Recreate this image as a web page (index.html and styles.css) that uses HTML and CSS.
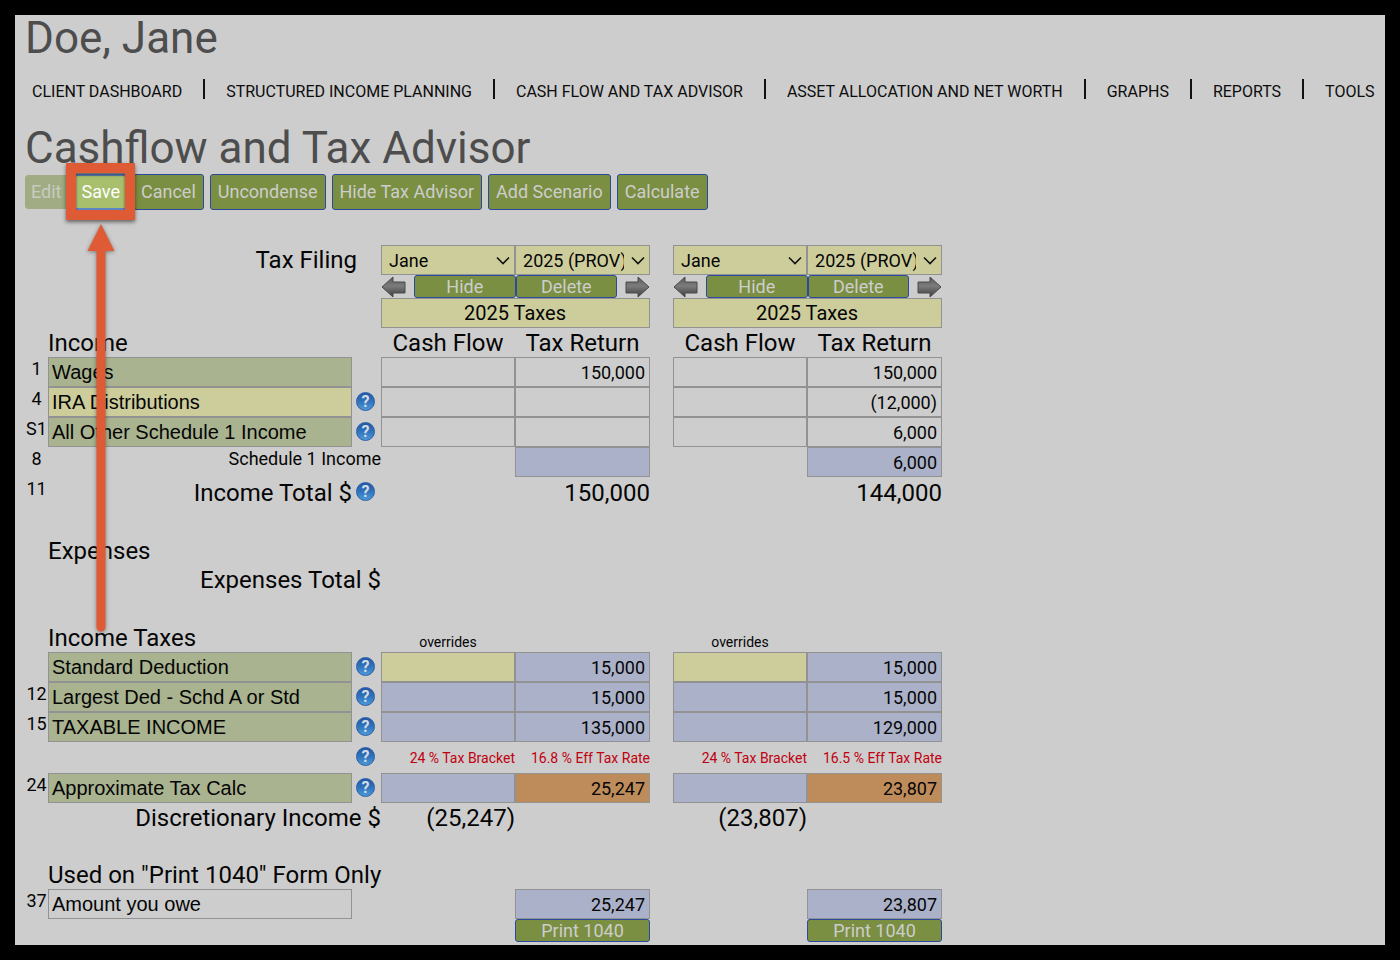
FILE: index.html
```html
<!DOCTYPE html>
<html lang="en">
<head>
<meta charset="utf-8">
<title>Cashflow and Tax Advisor</title>
<link rel="stylesheet" href="styles.css">
</head>
<body>
<svg class="defs" width="0" height="0" aria-hidden="true">
  <defs>
    <linearGradient id="steel" x1="0" y1="0" x2="0" y2="1">
      <stop offset="0" stop-color="#5a5a5a"/>
      <stop offset="0.45" stop-color="#7c7c7c"/>
      <stop offset="1" stop-color="#3c3c3c"/>
    </linearGradient>
    <symbol id="arrow-left" viewBox="0 0 25 22">
      <path d="M1 11 12 1V6H24V17H12V21Z" fill="url(#steel)" stroke="#4a4a4a" stroke-linejoin="round"/>
    </symbol>
    <symbol id="arrow-right" viewBox="0 0 25 22">
      <path d="M24 11 13 1V6H1V17H13V21Z" fill="url(#steel)" stroke="#4a4a4a" stroke-linejoin="round"/>
    </symbol>
    <symbol id="chevron" viewBox="0 0 14 9">
      <path d="M1 1.500 7 7.500 13 1.500" fill="none" stroke="#111" stroke-width="1.600"/>
    </symbol>
  </defs>
</svg>
<main class="page">
  <h1 class="title">Doe, Jane</h1>
  <nav class="menu">
    <a href="#">CLIENT DASHBOARD</a>
    <a href="#">STRUCTURED INCOME PLANNING</a>
    <a href="#">CASH FLOW AND TAX ADVISOR</a>
    <a href="#">ASSET ALLOCATION AND NET WORTH</a>
    <a href="#">GRAPHS</a>
    <a href="#">REPORTS</a>
    <a href="#">TOOLS</a>
  </nav>
  <h2 class="title">Cashflow and Tax Advisor</h2>
  <div class="toolbar">
    <button class="btn" disabled>Edit</button>
    <div class="callout">
      <button class="btn btn-save">Save</button>
      <svg class="pointer" width="28" height="408" viewBox="0 0 28 408" aria-hidden="true">
        <path d="M14 0 27.500 27H18.500V403a4.500 4.500 0 0 1-9 0V27H0.500Z" fill="#de5b35"/>
      </svg>
    </div>
    <button class="btn">Cancel</button>
    <button class="btn">Uncondense</button>
    <button class="btn">Hide Tax Advisor</button>
    <button class="btn">Add Scenario</button>
    <button class="btn">Calculate</button>
  </div>

  <table class="sheet">
    <colgroup>
      <col class="c-line"><col class="c-name"><col class="c-help">
      <col class="c-cash"><col class="c-tax"><col class="c-gap"><col class="c-cash"><col class="c-tax">
    </colgroup>
    <tbody>
      <tr class="row">
        <td></td><th class="big right filing" colspan="2">Tax Filing</th>
        <td><div class="pick"><select aria-label="Filer, scenario 1"><option>Jane</option></select><svg><use href="#chevron"/></svg></div></td>
        <td><div class="pick"><select aria-label="Tax year, scenario 1"><option>2025 (PROV)</option></select><svg><use href="#chevron"/></svg></div></td>
        <td></td>
        <td><div class="pick"><select aria-label="Filer, scenario 2"><option>Jane</option></select><svg><use href="#chevron"/></svg></div></td>
        <td><div class="pick"><select aria-label="Tax year, scenario 2"><option>2025 (PROV)</option></select><svg><use href="#chevron"/></svg></div></td>
      </tr>
      <tr class="slim">
        <td colspan="3"></td>
        <td colspan="2"><div class="moves">
          <button class="move" aria-label="Move left"><svg><use href="#arrow-left"/></svg></button>
          <button class="btn btn-slim">Hide</button><button class="btn btn-slim">Delete</button>
          <button class="move" aria-label="Move right"><svg><use href="#arrow-right"/></svg></button>
        </div></td>
        <td></td>
        <td colspan="2"><div class="moves">
          <button class="move" aria-label="Move left"><svg><use href="#arrow-left"/></svg></button>
          <button class="btn btn-slim">Hide</button><button class="btn btn-slim">Delete</button>
          <button class="move" aria-label="Move right"><svg><use href="#arrow-right"/></svg></button>
        </div></td>
      </tr>
      <tr class="row">
        <td colspan="3"></td>
        <td colspan="2"><input class="field yellow name" aria-label="Name, scenario 1" value="2025 Taxes"></td>
        <td></td>
        <td colspan="2"><input class="field yellow name" aria-label="Name, scenario 2" value="2025 Taxes"></td>
      </tr>
      <tr class="head">
        <td></td><th class="big" colspan="2">Income</th>
        <th class="big center">Cash Flow</th><th class="big center">Tax Return</th><td></td>
        <th class="big center">Cash Flow</th><th class="big center">Tax Return</th>
      </tr>
      <tr class="row">
        <td class="line">1</td><th><div class="label green">Wages</div></th><td></td>
        <td><input class="field" aria-label="Wages cash flow 1"></td><td><input class="field" aria-label="Wages tax return 1" value="150,000"></td><td></td>
        <td><input class="field" aria-label="Wages cash flow 2"></td><td><input class="field" aria-label="Wages tax return 2" value="150,000"></td>
      </tr>
      <tr class="row">
        <td class="line">4</td><th><div class="label yellow">IRA Distributions</div></th><td><button class="help">?</button></td>
        <td><input class="field" aria-label="IRA cash flow 1"></td><td><input class="field" aria-label="IRA tax return 1"></td><td></td>
        <td><input class="field" aria-label="IRA cash flow 2"></td><td><input class="field" aria-label="IRA tax return 2" value="(12,000)"></td>
      </tr>
      <tr class="row">
        <td class="line">S1</td><th><div class="label green">All Other Schedule 1 Income</div></th><td><button class="help">?</button></td>
        <td><input class="field" aria-label="Other income cash flow 1"></td><td><input class="field" aria-label="Other income tax return 1"></td><td></td>
        <td><input class="field" aria-label="Other income cash flow 2"></td><td><input class="field" aria-label="Other income tax return 2" value="6,000"></td>
      </tr>
      <tr class="row">
        <td class="line">8</td><th class="note right" colspan="2">Schedule 1 Income</th>
        <td></td><td><input class="field blue" readonly aria-label="Schedule 1 income 1"></td><td></td>
        <td></td><td><input class="field blue" readonly aria-label="Schedule 1 income 2" value="6,000"></td>
      </tr>
      <tr class="row tall">
        <td class="line">11</td><th class="big right">Income Total $</th><td><button class="help">?</button></td>
        <td></td><td class="big right">150,000</td><td></td><td></td><td class="big right">144,000</td>
      </tr>
      <tr class="spacer"><td colspan="8"></td></tr>
      <tr class="head"><td></td><th class="big" colspan="7">Expenses</th></tr>
      <tr class="row"><td></td><th class="big right" colspan="2">Expenses Total $</th><td colspan="5"></td></tr>
      <tr class="spacer"><td colspan="8"></td></tr>
      <tr class="head">
        <td></td><th class="big" colspan="2">Income Taxes</th>
        <td class="small center low">overrides</td><td></td><td></td><td class="small center low">overrides</td><td></td>
      </tr>
      <tr class="row">
        <td></td><th><div class="label green">Standard Deduction</div></th><td><button class="help">?</button></td>
        <td><input class="field yellow" aria-label="Standard deduction override 1"></td><td><input class="field blue" readonly aria-label="Standard deduction 1" value="15,000"></td><td></td>
        <td><input class="field yellow" aria-label="Standard deduction override 2"></td><td><input class="field blue" readonly aria-label="Standard deduction 2" value="15,000"></td>
      </tr>
      <tr class="row">
        <td class="line">12</td><th><div class="label green">Largest Ded - Schd A or Std</div></th><td><button class="help">?</button></td>
        <td><input class="field blue" readonly aria-label="Largest deduction override 1"></td><td><input class="field blue" readonly aria-label="Largest deduction 1" value="15,000"></td><td></td>
        <td><input class="field blue" readonly aria-label="Largest deduction override 2"></td><td><input class="field blue" readonly aria-label="Largest deduction 2" value="15,000"></td>
      </tr>
      <tr class="row">
        <td class="line">15</td><th><div class="label green">TAXABLE INCOME</div></th><td><button class="help">?</button></td>
        <td><input class="field blue" readonly aria-label="Taxable income override 1"></td><td><input class="field blue" readonly aria-label="Taxable income 1" value="135,000"></td><td></td>
        <td><input class="field blue" readonly aria-label="Taxable income override 2"></td><td><input class="field blue" readonly aria-label="Taxable income 2" value="129,000"></td>
      </tr>
      <tr class="row tall">
        <td colspan="2"></td><td><button class="help">?</button></td>
        <td class="small red right">24 % Tax Bracket</td><td class="small red right">16.8 % Eff Tax Rate</td><td></td>
        <td class="small red right">24 % Tax Bracket</td><td class="small red right">16.5 % Eff Tax Rate</td>
      </tr>
      <tr class="row">
        <td class="line">24</td><th><div class="label green">Approximate Tax Calc</div></th><td><button class="help">?</button></td>
        <td><input class="field blue" readonly aria-label="Tax override 1"></td><td><input class="field orange" readonly aria-label="Tax 1" value="25,247"></td><td></td>
        <td><input class="field blue" readonly aria-label="Tax override 2"></td><td><input class="field orange" readonly aria-label="Tax 2" value="23,807"></td>
      </tr>
      <tr class="head">
        <td></td><th class="big right" colspan="2">Discretionary Income $</th>
        <td class="big right">(25,247)</td><td></td><td></td><td class="big right">(23,807)</td><td></td>
      </tr>
      <tr class="spacer"><td colspan="8"></td></tr>
      <tr class="head"><td></td><th class="big" colspan="7">Used on "Print 1040" Form Only</th></tr>
      <tr class="row">
        <td class="line">37</td><th><div class="label">Amount you owe</div></th><td></td>
        <td></td><td><input class="field blue" readonly aria-label="Amount you owe 1" value="25,247"></td><td></td>
        <td></td><td><input class="field blue" readonly aria-label="Amount you owe 2" value="23,807"></td>
      </tr>
      <tr class="slim">
        <td colspan="4"></td><td><button class="btn btn-slim wide">Print 1040</button></td>
        <td colspan="2"></td><td><button class="btn btn-slim wide">Print 1040</button></td>
      </tr>
    </tbody>
  </table>
</main>
</body>
</html>
```
FILE: styles.css
```css
* { box-sizing: border-box; }

body {
  margin: 0;
  padding: 15px;
  background: #000;
  color: #050505;
  font-family: Roboto, "Liberation Sans", sans-serif;
}

button, input, select { font-family: inherit; color: inherit; }

.defs { position: absolute; }

.page {
  min-height: calc(100vh - 30px);
  padding: 0 0 3px 10px;
  background: #cdcdcd;
}

.title {
  margin: 0;
  font-size: 44px;
  font-weight: 400;
  line-height: 46px;
  color: #4d4d4d;
}

.menu {
  display: flex;
  padding: 18px 0 21px 7px;
  white-space: nowrap;
}

.menu a {
  display: flex;
  align-items: flex-start;
  font-size: 16px;
  line-height: 25px;
  color: #0c0c0c;
  text-decoration: none;
}

.menu a + a::before {
  content: "";
  width: 2px;
  height: 20px;
  margin: 0 21px;
  background: #111;
}

.toolbar {
  display: flex;
  align-items: center;
  gap: 6px;
  margin: 3px 0 35px;
}

.btn {
  height: 36px;
  padding: 0 7px;
  border: 1px solid #2b4a9e;
  border-radius: 3px;
  background: #7a8f41;
  color: #cdcdcd;
  font-size: 18px;
  line-height: 22px;
}

.btn:disabled {
  height: 34px;
  padding: 0 6px 0 5px;
  border-color: #a1ac85;
  background: #a1ac85;
  color: #c8ccc0;
}

.callout { position: relative; z-index: 1; }

.callout::after {
  content: "";
  position: absolute;
  inset: -11px -8px -10px;
  border: 10px solid #de5b35;
  box-shadow: 0 2px 4px #0008, inset 0 2px 3px #0008;
  pointer-events: none;
}

.btn-save {
  display: block;
  border: 2px solid #5f85c4;
  padding: 0 5px;
  background: #a8c06e;
  color: #fff;
}

.pointer {
  position: absolute;
  top: 50px;
  left: 50%;
  margin-left: -14px;
  filter: drop-shadow(0 1px 2px #0006);
  pointer-events: none;
}

.sheet {
  width: 917px;
  table-layout: fixed;
  border-spacing: 0;
}

.sheet td, .sheet th {
  padding: 0;
  font-weight: 400;
  text-align: left;
  white-space: nowrap;
}

.c-line { width: 23px; }
.c-name { width: 304px; }
.c-help { width: 29px; }
.c-cash { width: 134px; }
.c-tax { width: 135px; }
.c-gap { width: 23px; }

.row { height: 30px; }
.tall { height: 31px; }
.head { height: 29px; }
.slim { height: 23px; }
.spacer { height: 28px; }

.sheet .right { text-align: right; }
.sheet .center { text-align: center; }
.sheet .filing { padding-right: 24px; }

.big { font-size: 24px; line-height: 28px; }
.small { font-size: 14px; line-height: 20px; }
.red { color: #c00010; }
.sheet .low { vertical-align: bottom; }

.sheet .line {
  vertical-align: top;
  text-align: center;
  font-size: 18px;
  line-height: 23px;
}

.sheet .note {
  vertical-align: top;
  font-size: 18px;
  line-height: 23px;
}

.label, .field {
  display: block;
  width: 100%;
  height: 30px;
  padding: 0 4px 0 3px;
  border: 1px solid #929292;
  border-radius: 0;
  background: #cdcdcd;
}

.label {
  font-family: "Liberation Sans", Arial, sans-serif;
  font-size: 20px;
  line-height: 28px;
}

.field {
  font-size: 18px;
  text-align: right;
}

.name { font-size: 20px; text-align: center; }

.green { background: #a9b38f; }
.yellow { background: #cdcd9c; }
.blue { background: #abb1c8; }
.orange { background: #be8c5b; }

.pick { position: relative; }

.pick select {
  appearance: none;
  display: block;
  width: 100%;
  height: 30px;
  padding: 0 25px 0 7px;
  border: 1px solid #929292;
  border-radius: 0;
  background: #cdcd9c;
  font-size: 18px;
}

.pick svg {
  position: absolute;
  top: 11px;
  right: 5px;
  width: 14px;
  height: 9px;
  pointer-events: none;
}

.moves { display: flex; align-items: center; height: 23px; }

.moves .btn { flex: 1; }

.move {
  width: 25px;
  height: 22px;
  margin-right: 8px;
  padding: 0;
  border: 0;
  background: none;
}

.move:last-child { margin: 0 0 0 8px; }

.move svg { display: block; width: 25px; height: 22px; }

.btn-slim {
  display: block;
  height: 23px;
  padding: 0;
  line-height: 20px;
}

.wide { width: 100%; }

.help {
  display: block;
  width: 19px;
  height: 19px;
  margin: 0 0 2px 4px;
  padding: 0;
  border: 1px solid #2a5ca8;
  border-radius: 50%;
  background: linear-gradient(#2357a5, #2f74bd 50%, #4d9ad6);
  color: #d3dae3;
  font-size: 16px;
  font-weight: 700;
  line-height: 17px;
  text-align: center;
}
```
